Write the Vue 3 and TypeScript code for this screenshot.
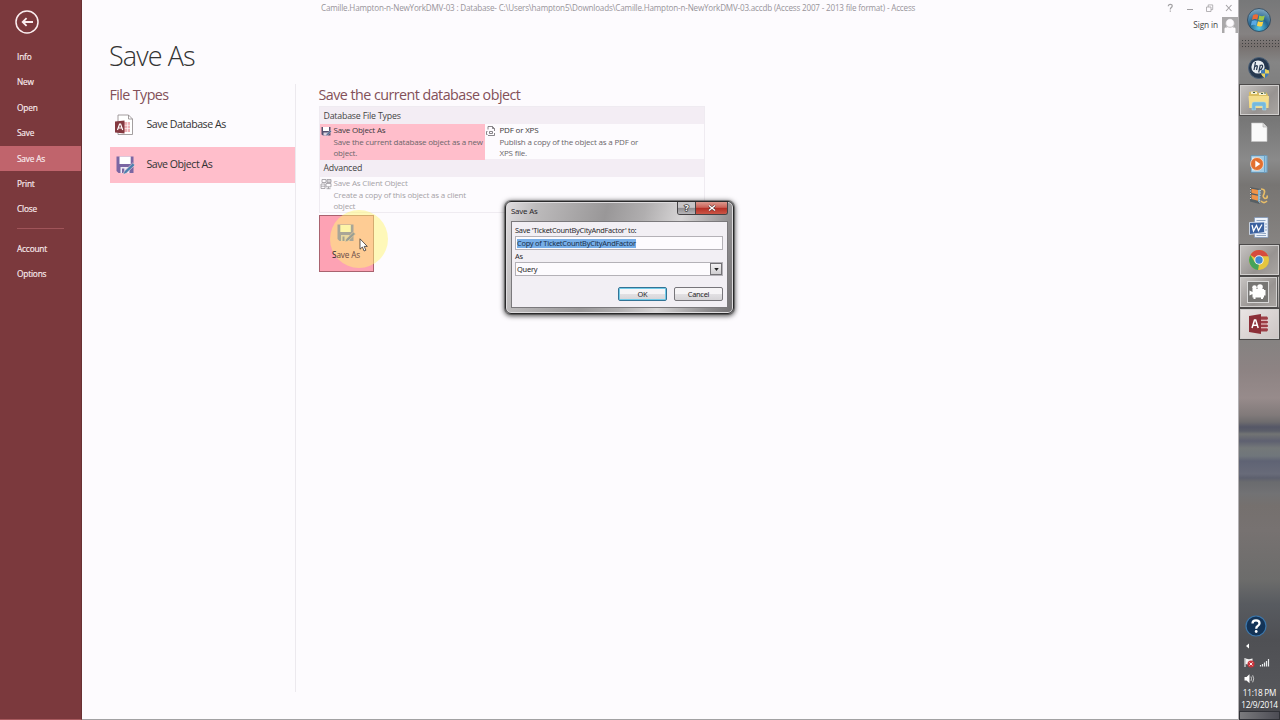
<script setup lang="ts">
import { ref } from 'vue'

type NavItem = {
  id: string;
  label: string;
}

const navItems: NavItem[] = [
  { id: 'info', label: 'Info' },
  { id: 'new', label: 'New' },
  { id: 'open', label: 'Open' },
  { id: 'save', label: 'Save' },
  { id: 'saveas', label: 'Save As' },
  { id: 'print', label: 'Print' },
  { id: 'close', label: 'Close' },
]
const activeNav = ref('saveas')
const objectName = 'TicketCountByCityAndFactor'
</script>

<template>
  <div class="screen">
    <nav class="sidebar">
      <svg class="back" viewBox="0 0 26 26">
        <circle cx="13" cy="13" r="11" fill="none" stroke="#fbeef0" stroke-width="1.5" />
        <path d="M19 13H9M12.6 9.2L8.7 13l3.9 3.8" fill="none" stroke="#fbeef0" stroke-width="1.8" />
      </svg>
      <a
        v-for="item in navItems"
        :key="item.id"
        class="nav-item"
        :class="{ active: item.id === activeNav }"
        @click="activeNav = item.id"
      >{{ item.label }}</a>
      <hr class="nav-line">
      <a class="nav-item">Account</a>
      <a class="nav-item">Options</a>
    </nav>

    <main class="main">
      <header class="titlebar">
        <span class="doc-title">Camille.Hampton-n-NewYorkDMV-03 : Database- C:\Users\hampton5\Downloads\Camille.Hampton-n-NewYorkDMV-03.accdb (Access 2007 - 2013 file format) - Access</span>
        <svg class="win-buttons" viewBox="0 0 68 12" fill="none" stroke="#a3a1a4" stroke-width="1">
          <path d="M2.3 4.2C2.4 1.6 6.4 1.7 6.2 4.1C6 5.6 4.3 5.4 4.3 7.4M4.3 8.6v1.2" stroke-width="1.2" />
          <path d="M21 7.500h6" />
          <path d="M40.500 5h4.500v4.500h-4.500zM42.200 5V2.900h4.500v4.700H45" stroke-width="0.800" />
          <path d="M60 3l5.500 6M65.500 3l-5.500 6" stroke-width="1.100" />
        </svg>
      </header>
      <div class="account">
        <span>Sign in</span>
        <svg viewBox="0 0 16 16" width="16" height="16">
          <rect width="16" height="16" fill="#aaa8aa" />
          <path d="M2.500 16v-4.200q0-1.300 1.500-1.300h1.500a4.300 4.600 0 1 1 5 0H12q1.500 0 1.500 1.300V16z" fill="#fdfbfe" />
          <circle cx="8" cy="6" r="4.300" fill="#fdfbfe" stroke="#aaa8aa" stroke-width=".7" />
        </svg>
      </div>

      <h1>Save As</h1>

      <div class="columns">
        <section class="types">
          <h2>File Types</h2>
          <div class="type">
            <svg viewBox="0 0 22 22" width="22" height="22">
              <path d="M4 1h10.500l4 4v15.500H4z" fill="#fff" stroke="#8d8788" stroke-width=".8" />
              <path d="M14.500 1v4h4" fill="none" stroke="#8d8788" stroke-width=".8" />
              <path d="M10 8h6v10h-6z" fill="#eeb0b6" />
              <path d="M10 11.300h7M10 14.500h7M13.500 8v10" stroke="#fff" stroke-width=".6" />
              <path d="M1 7.500l9.500-1v13l-9.500-1z" fill="#843840" />
              <path d="M3.500 16l2.100-6h1l2.100 6M4.300 14h3.600" fill="none" stroke="#fff" stroke-width="1.200" />
            </svg>
            <span>Save Database As</span>
          </div>
          <div class="type selected">
            <svg viewBox="0 0 22 22" width="22" height="22">
              <path d="M2.500 2.500h17V19h-15l-2-2z" fill="#7b66a3" />
              <path d="M5.500 2.500h11.200V10H5.500z" fill="#fff" />
              <path d="M6.500 13h9v6h-9z" fill="#efeaf5" />
              <path d="M8 14.500h2.300V19H8z" fill="#7b66a3" />
              <path d="M9 20.500l1.200-3.200 8.500-8.300 2.200 2.100-8.600 8.200z" fill="#4c80ad" stroke="#ffd6de" stroke-width=".6" />
            </svg>
            <span>Save Object As</span>
          </div>
        </section>

        <section class="objects">
          <h2>Save the current database object</h2>
          <div class="gallery">
            <h3>Database File Types</h3>
            <div class="row">
              <div class="option chosen">
                <svg viewBox="0 0 12 12" width="12" height="12">
                  <path d="M1.500 2h9v8.500h-7.500l-1.500-1z" fill="#55506f" />
                  <path d="M3 2h6v4H3z" fill="#fff" />
                  <path d="M3.500 7.500h4.500v3H3.500z" fill="#ddd6e4" />
                  <path d="M5.500 11l1-2 4-3.700 1 1-4 4z" fill="#456d94" stroke="#ffd5dd" stroke-width=".4" />
                </svg>
                <div>
                  <b>Save Object As</b>
                  <p>Save the current database object as a new object.</p>
                </div>
              </div>
              <div class="option pdf">
                <svg viewBox="0 0 12 12" width="12" height="12" fill="none" stroke="#6b686d" stroke-width=".8">
                  <path d="M3 4.500V1.500h4.500l2 2V6M7.500 1.500v2h2M2.500 6.500H1.500v3h1M9.500 8v2.500H3" />
                  <path d="M4.500 6.500h3v2h-3z" />
                </svg>
                <div>
                  <b>PDF or XPS</b>
                  <p>Publish a copy of the object as a PDF or XPS file.</p>
                </div>
              </div>
            </div>
            <h3>Advanced</h3>
            <div class="row">
              <div class="option disabled">
                <svg viewBox="0 0 12 12" width="12" height="12" fill="none" stroke="#9b989d" stroke-width=".8">
                  <path d="M2 1.500h4v3H2zM1 6h4v4.500H1zM1 8.200h4M7 1.500h4v3H7zM7 3h4M6 5.500h5v3.300H6zM8.500 8.800v2M6.500 10.700h4" />
                </svg>
                <div>
                  <b>Save As Client Object</b>
                  <p>Create a copy of this object as a client object</p>
                </div>
              </div>
            </div>
          </div>

          <button class="save-button">
            <svg viewBox="0 0 20 20" width="20" height="20">
              <path d="M1.500 1.500h16V18H3.500l-2-2z" fill="#a9a697" />
              <path d="M4.300 2h10.500v7H4.300z" fill="#fdf5a8" />
              <path d="M5 12h8.500v6H5z" fill="#e8d9a0" />
              <path d="M6.500 13.500h2V18h-2z" fill="#a5a290" />
              <path d="M9 19l1-3 7.500-7 2 2-7.500 7z" fill="#9a9f94" stroke="#f8d197" stroke-width=".6" />
            </svg>
            <span>Save As</span>
            <i class="halo"></i>
            <svg class="cursor" viewBox="0 0 9 14" width="9" height="14">
              <path d="M1 .8v10.400l2.400-2.200 1.700 4 1.800-.8-1.700-3.800h3.100z" fill="#fff" stroke="#3a3331" stroke-width=".8" />
            </svg>
          </button>
        </section>
      </div>
    </main>

    <aside class="taskbar">
      <div class="start">
        <svg viewBox="0 0 26 26" width="26" height="26">
          <defs>
            <radialGradient id="orb" cx=".5" cy=".85" r=".9">
              <stop offset="0" stop-color="#55c6e6" />
              <stop offset=".45" stop-color="#24648e" />
              <stop offset="1" stop-color="#8fb4cc" />
            </radialGradient>
          </defs>
          <circle cx="13" cy="13" r="11.500" fill="url(#orb)" stroke="#2c4156" stroke-width=".8" />
          <path d="M7 8.300q2.800-1.800 5.300-.3l-1 4.700q-2.600-1.300-5.300.3z" fill="#ec6a35" />
          <path d="M13.300 8.500q2.600 1.400 5.500.1l-1.200 4.700q-2.700 1.200-5.300-.2z" fill="#9cc84a" />
          <path d="M5.800 14q2.700-1.500 5.200-.2L9.900 18.400q-2.500-1.300-5 .1z" fill="#5aa9e4" />
          <path d="M12 14.300q2.600 1.300 5.300.1l-1.200 4.500q-2.600 1.300-5.200-.2z" fill="#fbd348" />
        </svg>
      </div>
      <div class="grip"></div>

      <div class="task">
        <svg viewBox="0 0 24 24" width="24" height="24">
          <circle cx="12" cy="12" r="10.500" fill="#26384f" stroke="#4d6177" />
          <circle cx="11" cy="11" r="6.600" fill="#e8edf1" />
          <path d="M8.500 6l-1.500 8M8 10.500q3-1.800 2.200.5l-.7 3M13.300 9l-1.600 7.500M13.200 9.500q3-1 2.300 1.500t-3 3" fill="none" stroke="#26384f" stroke-width="1.200" />
          <path d="M18 13l4 1.500q.5 5-4 7.500-4.500-2.500-4-7.500z" fill="#3f78b5" />
          <path d="M18 13l4 1.500v3h-4zM14 17.500h4V22q-3.500-2-4-4.500z" fill="#e8d05c" />
        </svg>
      </div>
      <div class="task open">
        <svg viewBox="0 0 24 24" width="24" height="24">
          <path d="M2 4l8-1 1 2 8-1 2 3v13H2z" fill="#d9bd61" />
          <path d="M4 3.500l6 .5v2H4zM12 5l7-1v3h-7z" fill="#f7f1d6" />
          <path d="M6 4.500h2M14 5.500h2M17 5h2" stroke="#3e5c42" stroke-width="1" />
          <path d="M1.500 8h20.500l-.5 12h-19z" fill="#f4dd8b" />
          <path d="M5 22v-6q0-2 2-2h10q2 0 2 2v6h-3.500v-4h-7v4z" fill="#75b9dd" stroke="#a9d8ee" stroke-width=".5" />
        </svg>
      </div>
      <div class="task">
        <svg viewBox="0 0 24 24" width="24" height="24">
          <path d="M4.500 3h11.500l4 4v14.500H4.500z" fill="#fafafa" stroke="#c6c6c6" stroke-width=".6" />
          <path d="M16 3v4h4" fill="#dcdcdc" stroke="#aaa" stroke-width=".6" />
        </svg>
      </div>
      <div class="task">
        <svg viewBox="0 0 24 24" width="24" height="24">
          <path d="M4 3.500h14.500v17H4z" fill="#9fcbe5" stroke="#5386ac" stroke-width=".6" />
          <path d="M17 3.500h3.500v17H17z" fill="#6da4c9" />
          <path d="M18.800 4v16" stroke="#bfe0f1" stroke-width=".7" />
          <path d="M5 5.500h3v2H5zM5 16.500h3v2H5z" fill="#d9edf7" />
          <circle cx="10" cy="12" r="6.500" fill="#e3702f" stroke="#f4ded0" stroke-width=".8" />
          <path d="M8.300 8.500l5 3.500-5 3.500z" fill="#fff" />
        </svg>
      </div>
      <div class="task">
        <svg viewBox="0 0 24 24" width="24" height="24">
          <path d="M3 3l10.500 2-1 15L3 17.500z" fill="#575f63" />
          <path d="M4.500 4.800l6.500 1.200v4.500L4.500 9zM4.500 10.500l6.500 1.200v5L4.500 15z" fill="#ef9348" />
          <path d="M11 6l2.500-.5-.8 13-1.700-1z" fill="#86b6cf" />
          <path d="M3.500 4v12.500M13.300 6l-.7 13" stroke="#cfd9dc" stroke-width="1" stroke-dasharray="1 1.500" />
          <path d="M14 5q5 0 3 5-2 3 1 4.500 3 0 2-3M14 17q3 3 6 0" fill="none" stroke="#e8bd68" stroke-width="1.700" />
        </svg>
      </div>
      <div class="task">
        <svg viewBox="0 0 24 24" width="24" height="24">
          <path d="M7.500 1.500h13.500v20H7.500z" fill="#edf3fb" stroke="#7994b9" stroke-width=".7" />
          <path d="M9.500 4.500h9M9.500 17.500h9.500M9.500 19.500h9.500M18 8h2M18 11h2M18 14h2" stroke="#7791b4" stroke-width=".8" />
          <path d="M2.500 6.500l15-.5v10.500l-15 2z" fill="#3c62a0" stroke="#dfe8f5" stroke-width=".8" />
          <path d="M5 9l1.500 6L9.500 9.500l2 5L15 8.500" fill="none" stroke="#fff" stroke-width="1.300" />
        </svg>
      </div>
      <div class="task open">
        <svg viewBox="0 0 24 24" width="24" height="24">
          <circle cx="12" cy="12" r="10" fill="#e5c63f" />
          <path d="M12 12L3.400 7A10 10 0 0 1 21.300 8.300H12z" fill="#d64b3e" />
          <path d="M3.400 7L8 14.500l4 2-1 5.450A10 10 0 0 1 3.400 7z" fill="#45a35a" />
          <circle cx="12" cy="12" r="4.700" fill="#f4f4f0" />
          <circle cx="12" cy="12" r="3.700" fill="#4188d1" />
        </svg>
      </div>
      <div class="task open stacked">
        <svg viewBox="0 0 24 24" width="24" height="24">
          <rect x="1.500" y="1.500" width="21" height="21" fill="#777674" stroke="#d8d8d8" stroke-width="1" />
          <circle cx="8.500" cy="7.500" r="2.300" fill="#fff" />
          <circle cx="14" cy="7" r="2.800" fill="#fff" />
          <path d="M6.500 9h11.500v8.500h-1V19h-2v-1.500H9.500V19h-2v-1.500h-1zM3.500 10.500l3 1.500v2l-3 1.500zM18 10h1.500v5.500H18z" fill="#fff" />
        </svg>
      </div>
      <div class="task open access">
        <svg viewBox="0 0 24 24" width="24" height="24">
          <path d="M13 4.500h7q2 1.900 0 3.750 2 1.900 0 3.750 2 1.900 0 3.750 2 1.900 0 3.750h-7z" fill="#9c3d45" />
          <path d="M14 8.250h7M14 12h7M14 15.750h7" stroke="#f2dede" stroke-width="1" />
          <path d="M2 4l12-2v20L2 20z" fill="#8c2f38" />
          <path d="M5 16l2.500-8h1.200l2.500 8M6 13.300h4.300" fill="none" stroke="#fff" stroke-width="1.500" />
        </svg>
      </div>

      <div class="tray">
        <svg class="help" viewBox="0 0 22 22" width="22" height="22">
          <circle cx="11" cy="11" r="10" fill="#143457" stroke="#3c77ac" stroke-width="1.200" />
          <path d="M7.500 8.500Q7.500 5.300 11 5.300t3.500 3q0 1.700-1.800 2.700-1.500.8-1.500 2.700" fill="none" stroke="#fff" stroke-width="2.300" />
          <circle cx="11.200" cy="16.500" r="1.400" fill="#fff" />
        </svg>
        <svg class="status" viewBox="0 0 34 46" width="34" height="46">
          <path d="M7 5.500v5L4 8z" fill="#fff" />
          <path d="M3 20v9" stroke="#fff" stroke-width="1" />
          <path d="M3.500 20.500l3.500.7 3.500-.7v5.500l-3.500.7-3.500-.7z" fill="#f2f2f2" />
          <circle cx="9" cy="26" r="3.500" fill="#c9343c" />
          <path d="M7.500 24.500l3 3M10.500 24.500l-3 3" stroke="#fff" stroke-width=".9" />
          <path d="M18.500 28.500v-1.500M20.500 28.500v-2.500M22.500 28.500v-4M24.500 28.500v-5.500M26.500 28.500v-7.500" stroke="#e9ecee" stroke-width="1.200" />
          <path d="M2.500 39h2l3-2.700v9l-3-2.700h-2z" fill="#fff" />
          <path d="M9 38.500q1 2.200 0 4.400M10.700 37.300q2 3.500 0 7" fill="none" stroke="#e5e5e5" stroke-width=".8" />
        </svg>
        <time>11:18 PM<br>12/9/2014</time>
        <div class="peek"></div>
      </div>
    </aside>

    <div class="dialog">
      <div class="dialog-title">
        <span>Save As</span>
        <div class="caption">
          <i class="cap-help">?</i>
          <i class="cap-close">
            <svg viewBox="0 0 8 8" width="8" height="8">
              <path d="M1 1.500l6 5M7 1.500l-6 5" stroke="#5c3534" stroke-width="2.600" />
              <path d="M1 1.500l6 5M7 1.500l-6 5" stroke="#fff" stroke-width="1.500" />
            </svg>
          </i>
        </div>
      </div>
      <div class="dialog-body">
        <label>Save '{{ objectName }}' to:</label>
        <div class="field"><mark>Copy of {{ objectName }}</mark></div>
        <label class="as">As</label>
        <div class="field select">
          <span>Query</span>
          <i><svg viewBox="0 0 6 4" width="5" height="3"><path d="M0 0h6L3 4z" fill="#222" /></svg></i>
        </div>
        <div class="buttons">
          <button class="ok">OK</button>
          <button>Cancel</button>
        </div>
      </div>
    </div>
  </div>
</template>

<style>
body {
  margin: 0;
  overflow: hidden;
}
</style>

<style scoped>
* {
  box-sizing: border-box;
}

.screen {
  position: relative;
  display: flex;
  width: 1280px;
  height: 720px;
  overflow: hidden;
  background: #fdfbfe;
  font-family: "Open Sans", "Noto Sans", sans-serif;
  color: #444;
}

svg {
  display: block;
  flex: none;
}

h1, h2, h3, p {
  margin: 0;
  font-weight: 400;
}

/* left navigation */
.sidebar {
  width: 82px;
  flex: none;
  background: #7b393d;
  border-right: 1px solid #693033;
  border-bottom: 1px solid #a85b5f;
  padding-top: 9px;
}

.back {
  width: 26px;
  height: 26px;
  margin: 0 0 9px 14px;
}

.nav-item {
  display: block;
  height: 25.4px;
  line-height: 26px;
  padding-left: 17px;
  color: #faedf0;
  font-size: 8.3px;
  letter-spacing: -0.18px;
  -webkit-text-stroke: 0.15px #faedf0;
}

.nav-item.active {
  background: #c0646c;
}

.nav-line {
  width: 47px;
  height: 1px;
  margin: 6.5px 0 6.5px 17px;
  border: 0;
  background: #a05459;
}

/* main area */
.main {
  flex: 1;
  min-width: 0;
  border-bottom: 1px solid #a2a1a3;
}

.titlebar {
  display: flex;
  justify-content: space-between;
  height: 16px;
  padding: 2px 4px 0 239px;
}

.doc-title {
  font-size: 8.1px;
  line-height: 12px;
  letter-spacing: -0.19px;
  color: #98949a;
  white-space: nowrap;
}

.win-buttons {
  width: 68px;
  height: 12px;
}

.account {
  display: flex;
  justify-content: flex-end;
  gap: 4px;
  height: 17px;
  font-size: 8.3px;
  line-height: 17px;
  letter-spacing: -0.12px;
}

.account svg {
  margin-top: 1px;
}

h1 {
  margin: 3px 0 0 27px;
  font-size: 27px;
  line-height: 40px;
  letter-spacing: -0.9px;
  font-weight: 300;
  color: #333;
}

.columns {
  display: flex;
  margin: 8px 0 0 27.5px;
}

h2 {
  font-size: 14.3px;
  line-height: 21px;
  height: 22px;
  letter-spacing: -0.6px;
  color: #835059;
}

.types {
  width: 186px;
  height: 608px;
  border-right: 1px solid #ece9ee;
}

.type {
  display: flex;
  align-items: center;
  gap: 11px;
  height: 36px;
  padding: 0 4px;
  margin-top: 1px;
  font-size: 10.6px;
  letter-spacing: -0.47px;
  color: #333;
}

.type span {
  margin-top: -2px;
}

.type.selected {
  margin-top: 4px;
  background: #ffbecb;
}

.objects {
  width: 386px;
  margin-left: 23px;
}

.objects h2 {
  letter-spacing: -0.54px;
}

.gallery {
  border: 1px solid #efebf1;
  height: 107px;
}

h3 {
  height: 17px;
  line-height: 18px;
  padding-left: 4px;
  background: #f3edf4;
  font-size: 8.8px;
  letter-spacing: -0.2px;
  color: #444;
}

.row {
  display: flex;
  height: 36px;
}

.row + h3 {
  margin-top: -1px;
  height: 18px;
}

.option {
  display: flex;
  width: 165px;
  gap: 2px;
  font-size: 8px;
  letter-spacing: -0.19px;
  line-height: 11px;
  color: #6b666a;
}

.option.pdf {
  gap: 3px;
}

.option > svg {
  margin-top: 1px;
}

.option b {
  display: block;
  height: 12px;
  font-weight: 400;
  line-height: 12px;
  color: #3b383b;
}

.option p {
  width: 151px;
}

.option.chosen {
  background: #ffbecb;
}

.option.chosen b {
  letter-spacing: -0.2px;
}

.option.disabled,
.option.disabled b {
  color: #a5a2a6;
}

.save-button {
  position: relative;
  display: flex;
  flex-direction: column;
  align-items: center;
  width: 55px;
  height: 57px;
  margin-top: 2px;
  padding: 7px 0 0;
  border: 1px solid #a9626f;
  background: #fda2b4;
  font-family: inherit;
  font-size: 8.2px;
  letter-spacing: -0.15px;
  line-height: 12px;
  color: #6b4b48;
}

.save-button span,
.save-button > svg {
  position: relative;
  z-index: 1;
}

.save-button span {
  margin-top: 6px;
}

.save-button span::first-letter {
  color: #222;
}

.halo {
  position: absolute;
  left: 10px;
  top: -6px;
  width: 58px;
  height: 58px;
  border-radius: 50%;
  background: rgba(255, 246, 116, 0.5);
}

.save-button > svg.cursor {
  position: absolute;
  left: 39px;
  top: 22px;
}

/* taskbar on the right edge */
.taskbar {
  display: flex;
  flex-direction: column;
  width: 42px;
  flex: none;
  border-left: 1px solid #b3b0b3;
  background: linear-gradient(180deg, #777879 0, #858282 34px, #77706e 45px, #858585 62px, #777 120px, #8a8a8a 160px, #777573 185px, #888583 250px, #858281 340px, #8d8383 370px, #978b8b 398px, #817a7a 415px, #6e6c6e 422px, #555767 427px, #5b5e69 431px, #727474 434px, #5e6070 441px, #747879 448px, #70767b 456px, #5f6374 461px, #686b79 474px, #5d606e 478px, #6a6b6e 482px, #727274 494px, #75706e 506px, #777271 530px, #6c6c6b 580px, #585b60 604px, #4f5054 640px, #55565a 690px, #48484d 711px);
}

.start {
  display: flex;
  justify-content: center;
  height: 39px;
  padding: 7px 1px 0 0;
}

.grip {
  height: 8px;
  margin: 0 1px 5px 2px;
  background-image: radial-gradient(circle, #404040 0.5px, transparent 0.9px);
  background-size: 3px 3px;
}

.task {
  display: flex;
  align-items: center;
  justify-content: center;
  height: 32px;
  padding: 0 2px 1px 0;
}

.task.open {
  padding: 0 1px 1px 0;
  border: 1px solid #4c4a4a;
  box-shadow: inset 0 0 0 1px #d1cfce;
  background: linear-gradient(135deg, #c8c5c3, #979391 60%, #aaa6a3);
}

.task.stacked {
  border-right: 3px double #555;
}

.task.access {
  background: linear-gradient(135deg, #eae5e4, #cbc4c3);
}

.tray {
  display: flex;
  flex-direction: column;
  margin-top: auto;
  color: #fff;
}

.help {
  margin-left: 6px;
}

.status {
  margin: 1px 0 0 3px;
}

time {
  margin-top: 3px;
  font-size: 8.2px;
  line-height: 11.5px;
  text-align: center;
  white-space: nowrap;
  letter-spacing: -0.25px;
}

.peek {
  height: 9px;
  margin-top: 1px;
  border: 1px solid #303137;
  background: linear-gradient(90deg, #7a7a7d, #4c4c54);
}

/* dialog window */
.dialog {
  position: absolute;
  left: 505px;
  top: 201px;
  width: 229px;
  height: 113px;
  padding: 0 5px 5px;
  border: 1px solid #29292a;
  border-radius: 6px;
  background: linear-gradient(105deg, #e1dee0 0, #bdbbbc 12%, #999798 40%, #b0aeaf 55%, #d7d5d6 70%, #8e8c8e 90%, #737173 100%);
  box-shadow: inset 0 0 0 1px #dedcde, 0 0 0 1px rgba(50, 50, 50, 0.4), 0 1px 5px 1px rgba(0, 0, 0, 0.7);
  font-family: "Noto Sans", "Open Sans", sans-serif;
  font-size: 7.4px;
  letter-spacing: -0.18px;
  color: #29272a;
}

.dialog-title {
  display: flex;
  justify-content: space-between;
  height: 19px;
  line-height: 18px;
}

.dialog-title span {
  font-size: 7.8px;
}

.caption {
  display: flex;
  height: 13px;
  border: 1px solid #454345;
  border-top: 0;
  border-radius: 0 0 3px 3px;
  overflow: hidden;
}

.caption i {
  display: flex;
  align-items: center;
  justify-content: center;
  font-style: normal;
}

.cap-help {
  width: 18px;
  border-right: 1px solid #454345;
  background: linear-gradient(#c7c5c7 45%, #8e8c8f 50%, #b6b4b7);
  font-size: 9px;
  font-weight: 700;
  color: #fff;
  -webkit-text-stroke: 1.6px #444;
  paint-order: stroke fill;
}

.cap-close {
  width: 31px;
  background: linear-gradient(#dc9a8f 0, #cc6257 45%, #b42e25 50%, #cb5546);
}

.dialog-body {
  height: 87px;
  padding: 3px 4px 0 3px;
  border: 1px solid #7b797c;
  background: #f2eff4;
}

.dialog-body label {
  display: block;
  height: 11px;
  line-height: 11px;
  letter-spacing: -0.27px;
}

.dialog-body .as {
  height: 12px;
  line-height: 13px;
}

.field {
  display: flex;
  align-items: center;
  height: 14px;
  padding-left: 1px;
  border: 1px solid #b4b1b7;
  background: #fdfbfe;
}

mark {
  height: 9px;
  line-height: 9px;
  background: #76aee8;
  color: #1b304b;
  letter-spacing: -0.23px;
}

.select {
  justify-content: space-between;
}

.select i {
  display: flex;
  align-items: center;
  justify-content: center;
  width: 12px;
  height: 12px;
  border: 1px solid #747276;
  background: linear-gradient(#f4f2f4, #cfcdd0);
}

.buttons {
  display: flex;
  justify-content: flex-end;
  gap: 7px;
  margin-top: 11px;
}

.buttons button {
  width: 49px;
  height: 14px;
  padding: 0;
  border: 1px solid #77757a;
  border-radius: 2px;
  background: linear-gradient(#f6f4f6 48%, #e2e0e3 52%, #d6d4d7);
  font: inherit;
  line-height: 12px;
  letter-spacing: -0.25px;
  color: inherit;
}

.buttons .ok {
  border-color: #337395;
  box-shadow: inset 0 0 0 1px #73cbe8;
}
</style>
